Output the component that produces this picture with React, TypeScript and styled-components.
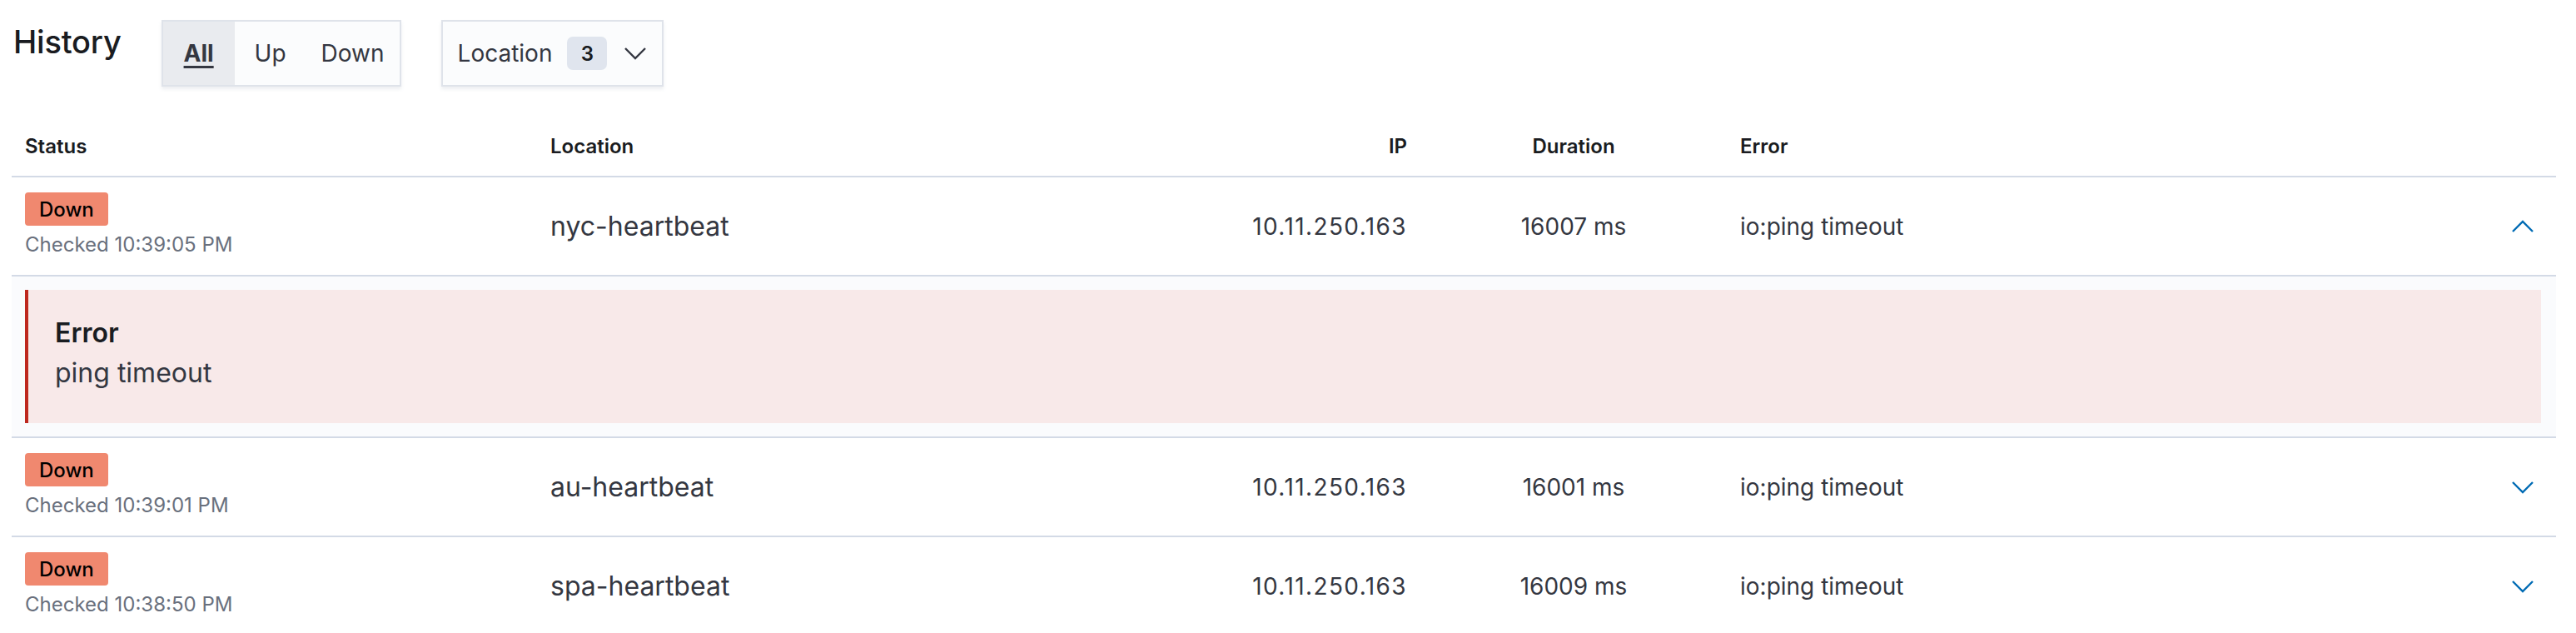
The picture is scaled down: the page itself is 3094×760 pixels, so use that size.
import React from 'react';
import styled, { createGlobalStyle } from 'styled-components';

interface Check {
  id: string;
  checked: string;
  location: string;
  ip: string;
  duration: string;
  error: string;
  message: string;
  expanded?: boolean;
}

const checks: Check[] = [
  {
    id: 'c1',
    checked: '10:39:05 PM',
    location: 'nyc-heartbeat',
    ip: '10.11.250.163',
    duration: '16007 ms',
    error: 'io:ping timeout',
    message: 'ping timeout',
    expanded: true,
  },
  {
    id: 'c2',
    checked: '10:39:01 PM',
    location: 'au-heartbeat',
    ip: '10.11.250.163',
    duration: '16001 ms',
    error: 'io:ping timeout',
    message: 'ping timeout',
  },
  {
    id: 'c3',
    checked: '10:38:50 PM',
    location: 'spa-heartbeat',
    ip: '10.11.250.163',
    duration: '16009 ms',
    error: 'io:ping timeout',
    message: 'ping timeout',
  },
];

const GlobalStyle = createGlobalStyle`
  html, body {
    margin: 0;
    padding: 0;
    background: #ffffff;
  }
  body {
    font-family: Inter, 'Liberation Sans', sans-serif;
    color: #343741;
    -webkit-font-smoothing: antialiased;
  }
`;

const Page = styled.div`
  padding: 24px 24px 0 14px;
  overflow: hidden;
  height: 760px;
  box-sizing: border-box;
`;

const Toolbar = styled.div`
  display: flex;
  align-items: flex-start;
  gap: 48px;
  margin-bottom: 37px;
`;

const Title = styled.h2`
  margin: 2px 0 0 2px;
  font-size: 38px;
  line-height: 48px;
  font-weight: 500;
  color: #1a1c21;
  letter-spacing: -0.2px;
`;

const ButtonGroup = styled.div`
  display: flex;
  height: 80px;
  box-sizing: border-box;
  border: 2px solid #dfe3ea;
  background: #fbfcfd;
  box-shadow: 0 3px 4px rgba(152, 162, 179, 0.18);
`;

const GroupButton = styled.button<{ $selected?: boolean }>`
  min-width: 86px;
  padding: 0 18px;
  border: none;
  margin: 0;
  background: ${p => (p.$selected ? '#e9ebef' : 'transparent')};
  font-family: inherit;
  font-size: 28px;
  font-weight: ${p => (p.$selected ? 700 : 400)};
  color: #343741;
  text-decoration: ${p => (p.$selected ? 'underline' : 'none')};
  text-decoration-thickness: 3px;
  text-underline-offset: 5px;
  cursor: pointer;
`;

const FilterButton = styled.button`
  display: flex;
  align-items: center;
  height: 80px;
  box-sizing: border-box;
  padding: 0 16px 0 18px;
  margin: 0;
  border: 2px solid #dfe3ea;
  background: #fbfcfd;
  box-shadow: 0 3px 4px rgba(152, 162, 179, 0.18);
  font-family: inherit;
  font-size: 28px;
  color: #343741;
  gap: 18px;
  cursor: pointer;
`;

const CountBadge = styled.span`
  display: inline-flex;
  align-items: center;
  justify-content: center;
  width: 48px;
  height: 40px;
  border-radius: 7px;
  background: #e0e5ee;
  color: #1a1c21;
  font-size: 24px;
  font-weight: 600;
`;

const Table = styled.div`
  display: flex;
  flex-direction: column;
`;

const columns = '631px 655px 406px 368px 1fr 80px';

const HeaderRow = styled.div`
  display: grid;
  grid-template-columns: ${columns};
  height: 70px;
  align-items: center;
  border-bottom: 2px solid #d3dae6;
`;

const HeaderCell = styled.div<{ $align?: 'left' | 'right' | 'center' }>`
  padding: 0 16px;
  font-size: 24px;
  line-height: 36px;
  font-weight: 600;
  color: #1a1c21;
  text-align: ${p => p.$align || 'left'};
`;

const Row = styled.div`
  display: grid;
  grid-template-columns: ${columns};
  align-items: center;
  border-bottom: 2px solid #d3dae6;
`;

const Cell = styled.div<{ $align?: 'left' | 'right' | 'center'; $large?: boolean; $spaced?: boolean }>`
  padding: 18px 16px;
  font-size: ${p => (p.$large ? '32px' : '28px')};
  line-height: 42px;
  color: #343741;
  text-align: ${p => p.$align || 'left'};
  letter-spacing: ${p => (p.$spaced ? '1.4px' : 'normal')};
`;

const StatusCell = styled.div`
  display: flex;
  flex-direction: column;
  align-items: flex-start;
  gap: 5px;
  padding: 18px 16px;
`;

const StatusBadge = styled.span`
  display: inline-flex;
  align-items: center;
  height: 40px;
  padding: 0 17px;
  border-radius: 4px;
  background: #f0886f;
  color: #000000;
  font-size: 24px;
  font-weight: 500;
`;

const CheckedAt = styled.span`
  font-size: 24px;
  line-height: 36px;
  color: #69707d;
`;

const ExpandCell = styled.div`
  display: flex;
  justify-content: center;
  align-items: center;
`;

const ExpandButton = styled.button`
  display: flex;
  align-items: center;
  justify-content: center;
  width: 40px;
  height: 40px;
  padding: 0;
  border: none;
  background: transparent;
  color: #006bb4;
  cursor: pointer;
`;

const ExpandedRow = styled.div`
  padding: 16px 18px 16px 16px;
  background: #fafbfd;
  border-bottom: 2px solid #d3dae6;
`;

const Callout = styled.div`
  border-left: 4px solid #bd271e;
  background: #f8e9e9;
  padding: 32px 32px 36px 32px;
`;

const CalloutTitle = styled.div`
  font-size: 32px;
  line-height: 40px;
  font-weight: 600;
  color: #1a1c21;
  margin-bottom: 4px;
`;

const CalloutText = styled.div`
  font-size: 32px;
  line-height: 48px;
  color: #343741;
`;

const Chevron: React.FC<{ up?: boolean; size?: number }> = ({ up, size = 32 }) => (
  <svg width={size} height={size} viewBox="0 0 16 16" fill="none" aria-hidden="true">
    <path
      d={up ? 'M2 11 L8 5 L14 11' : 'M2 5 L8 11 L14 5'}
      stroke="currentColor"
      strokeWidth="1.2"
      strokeLinejoin="miter"
    />
  </svg>
);

const App: React.FC = () => {
  return (
    <>
      <GlobalStyle />
      <Page>
        <Toolbar>
          <Title>History</Title>
          <ButtonGroup>
            <GroupButton $selected>All</GroupButton>
            <GroupButton>Up</GroupButton>
            <GroupButton>Down</GroupButton>
          </ButtonGroup>
          <FilterButton>
            Location
            <CountBadge>3</CountBadge>
            <Chevron />
          </FilterButton>
        </Toolbar>

        <Table>
          <HeaderRow>
            <HeaderCell>Status</HeaderCell>
            <HeaderCell>Location</HeaderCell>
            <HeaderCell $align="right">IP</HeaderCell>
            <HeaderCell $align="center">Duration</HeaderCell>
            <HeaderCell>Error</HeaderCell>
            <HeaderCell />
          </HeaderRow>

          {checks.map(check => (
            <React.Fragment key={check.id}>
              <Row>
                <StatusCell>
                  <StatusBadge>Down</StatusBadge>
                  <CheckedAt>Checked {check.checked}</CheckedAt>
                </StatusCell>
                <Cell $large>{check.location}</Cell>
                <Cell $align="right" $spaced>{check.ip}</Cell>
                <Cell $align="center">{check.duration}</Cell>
                <Cell>{check.error}</Cell>
                <ExpandCell>
                  <ExpandButton aria-label={check.expanded ? 'Collapse' : 'Expand'}>
                    <Chevron up={check.expanded} />
                  </ExpandButton>
                </ExpandCell>
              </Row>
              {check.expanded && (
                <ExpandedRow>
                  <Callout>
                    <CalloutTitle>Error</CalloutTitle>
                    <CalloutText>{check.message}</CalloutText>
                  </Callout>
                </ExpandedRow>
              )}
            </React.Fragment>
          ))}
        </Table>
      </Page>
    </>
  );
};

export default App;
